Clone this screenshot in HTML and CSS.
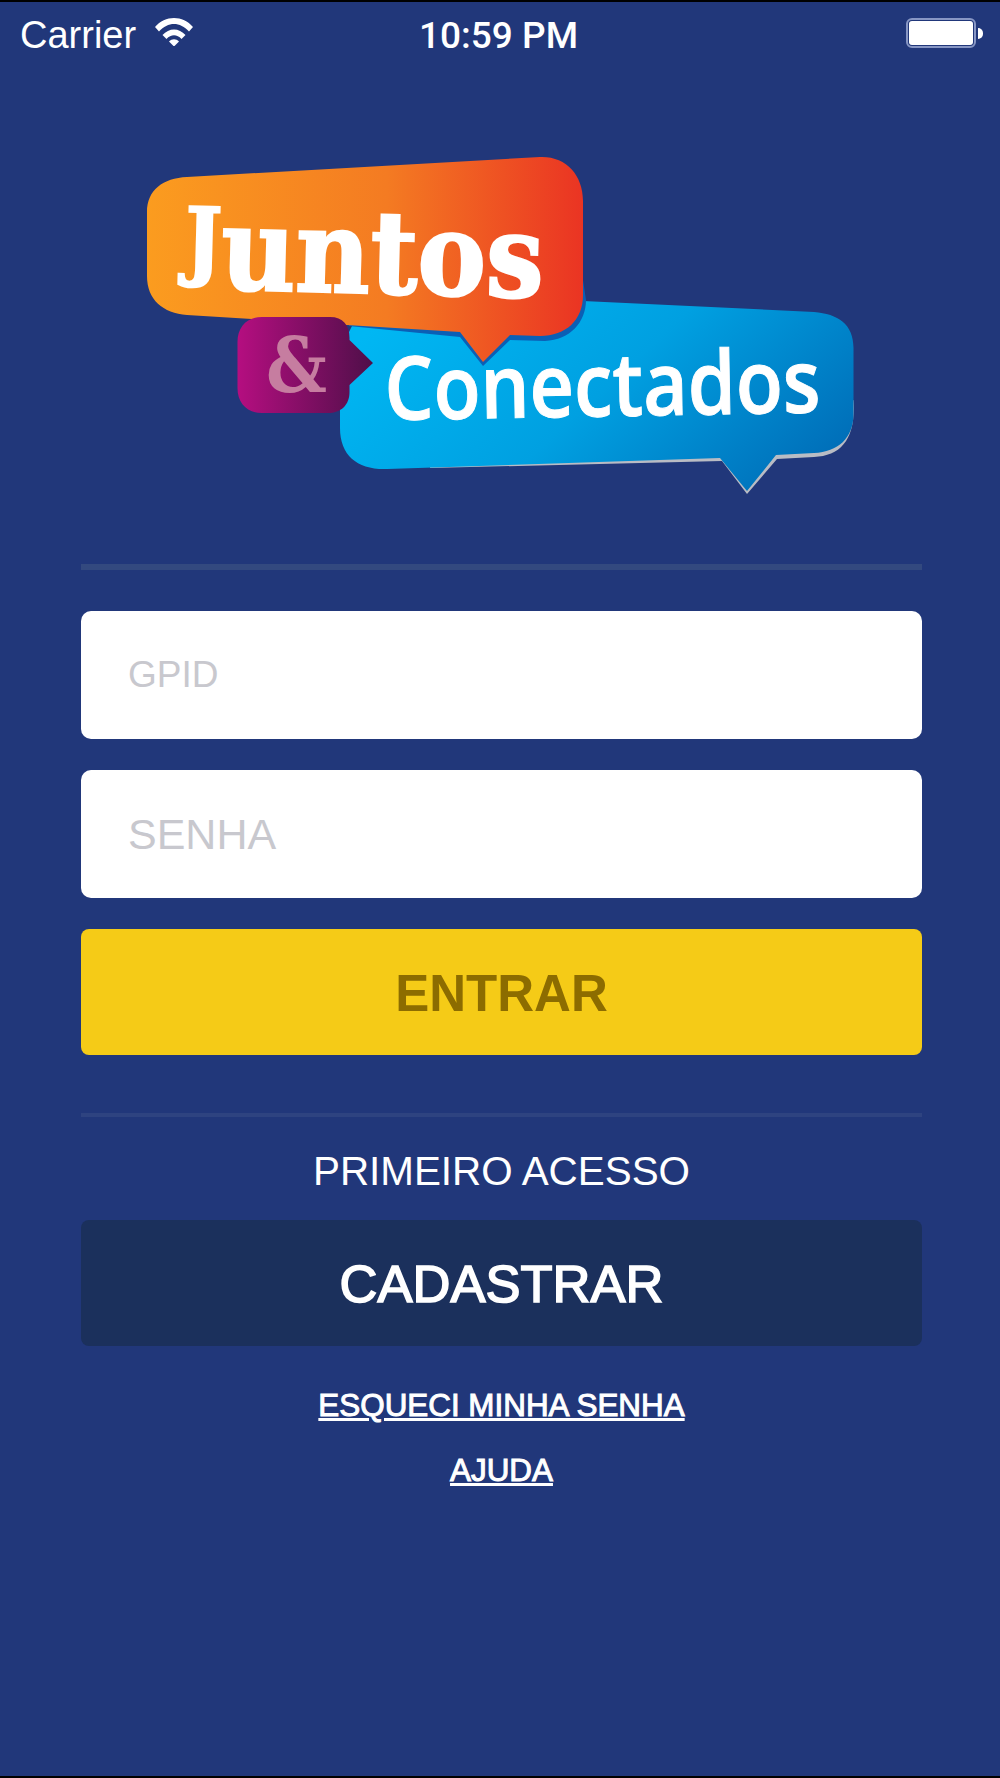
FILE: index.html
```html
<!DOCTYPE html>
<html lang="en">
<head>
  <meta charset="UTF-8" />
  <meta name="viewport" content="width=device-width, initial-scale=1.0" />
  <title>Juntos &amp; Conectados</title>
  <link rel="stylesheet" href="styles.css">
</head>
<body>
  <div class="screen">
    <div class="statusbar">
      <div class="status-left">
        <span>Carrier</span>
        <svg class="wifi" viewBox="0 0 38 28" width="38" height="28">
          <path d="M0 9 C10 -3 28 -3 38 9 L34 13.500 C25 3.500 13 3.500 4 13.500 Z" fill="#fff"/>
          <path d="M7.500 17 C14 9.500 24 9.500 30.500 17 L26.500 21 C22 16 16 16 11.500 21 Z" fill="#fff"/>
          <path d="M14 23.500 C17 20.500 21 20.500 24 23.500 L19 28.500 Z" fill="#fff"/>
        </svg>
      </div>
      <div class="status-time">10:59 PM</div>
      <div class="status-right">
        <div class="battery"><div class="battery-fill"></div></div>
        <div class="battery-nub"></div>
      </div>
    </div>

    <svg class="logo" viewBox="140 150 860 350" width="860" height="350">
      <defs>
        <linearGradient id="orange" x1="0" x2="1" y1="0" y2="0">
          <stop offset="0" stop-color="#fb9c1f"/>
          <stop offset="0.55" stop-color="#f47b22"/>
          <stop offset="1" stop-color="#ea3423"/>
        </linearGradient>
        <linearGradient id="blue" x1="0" x2="1" y1="0.3" y2="0.7">
          <stop offset="0" stop-color="#00b7f3"/>
          <stop offset="0.5" stop-color="#00a0e1"/>
          <stop offset="1" stop-color="#006fb9"/>
        </linearGradient>
        <linearGradient id="purple" x1="0" x2="1" y1="0" y2="0">
          <stop offset="0" stop-color="#b50e80"/>
          <stop offset="1" stop-color="#4f0f49"/>
        </linearGradient>
      </defs>
      <!-- blue bubble, grey edge first -->
      <path fill="#b9bcc4" d="M430 468 L722 461 L747 494 L777 459 L814 457 C842 456 856 438 853.500 400 L800 440 L430 460 Z"/>
      <path fill="url(#blue)" d="M352 326 L583 301 L814 312 C838 314 853.500 324 853.500 348 L853.500 414 C853.500 438 838 452 814 453 L776 455 L747 491 L720 458 L387 469 C358 470 340 456 340 428 L340 350 Z"/>
      <!-- orange bubble -->
      <path fill="#0b5fb5" d="M349 326 L460 337 L483 366 L510 340 L545 341 C570 340 586 322 586 300 L583 280 L349 300 Z"/>
      <path fill="url(#orange)" d="M187 177 L540 157 C566 156 583 175 583 201 L583 295 C583 320 566 336 540 336 L510 335 L483 362 L460 332 L187 315 C163 313 147 300 147 276 L147 212 C147 190 163 178 187 177 Z"/>
      <text class="logo-juntos" x="184" y="288" textLength="359" lengthAdjust="spacingAndGlyphs" transform="rotate(1.500 184 288)"><tspan class="logo-j" dy="-19">J</tspan><tspan dy="19">untos</tspan></text>
      <!-- purple bubble -->
      <path fill="url(#purple)" d="M262 317 L330 317 C343 317 349.500 325 349.500 338 L349.500 340 L373 363 L349.500 385 L349.500 392 C349.500 405 341 413 328 413 L262 413 C247 413 237.500 403 237.500 388 L237.500 342 C237.500 327 247 317 262 317 Z"/>
      <text class="logo-amp" x="266" y="392" textLength="61" lengthAdjust="spacingAndGlyphs">&amp;</text>
      <text class="logo-conectados" x="385" y="420" textLength="436" lengthAdjust="spacingAndGlyphs" transform="rotate(-1 385 420)">Conectados</text>
    </svg>

    <div class="form">
      <div class="rule rule-thick"></div>
      <input class="field" type="text" placeholder="GPID" />
      <input class="field field-second" type="password" placeholder="SENHA" />
      <button class="btn btn-yellow">ENTRAR</button>
      <div class="rule rule-thin"></div>
      <div class="first-access">PRIMEIRO ACESSO</div>
      <button class="btn btn-dark">CADASTRAR</button>
      <a class="link link-forgot" href="#">ESQUECI MINHA SENHA</a>
      <a class="link link-help" href="#">AJUDA</a>
    </div>
  </div>
</body>
</html>
```

FILE: styles.css
```css
* {
  box-sizing: border-box;
}

body {
  margin: 0;
  background: #21377a;
  font-family: "Liberation Sans", Arial, sans-serif;
  color: #fff;
}

.screen {
  height: 1778px;
  overflow: hidden;
  border-top: 2px solid #000;
  border-bottom: 2px solid #000;
}

.statusbar {
  display: grid;
  grid-template-columns: 1fr auto 1fr;
  align-items: center;
  height: 44px;
  margin-top: 11px;
  padding: 0 17px 0 20px;
  font-size: 38px;
}

.status-left {
  display: flex;
  align-items: center;
  gap: 19px;
}

.wifi {
  margin-bottom: 6px;
}

.status-time {
  margin-right: 6px;
  font-family: Roboto, sans-serif;
  font-weight: 500;
  font-size: 37px;
}

.status-right {
  display: flex;
  align-items: center;
  justify-content: flex-end;
  padding-bottom: 4px;
}

.battery {
  width: 70px;
  height: 30px;
  padding: 1px;
  border: 2px solid #8796c4;
  border-radius: 6px;
}

.battery-fill {
  height: 100%;
  background: #fff;
  border-radius: 3px;
}

.battery-nub {
  width: 5px;
  height: 11px;
  margin-left: 2px;
  background: #fff;
  border-radius: 0 6px 6px 0;
}

.logo {
  display: block;
  margin: 93px 0 0 140px;
}

.form {
  display: flex;
  flex-direction: column;
  margin: 64px 78px 0 81px;
}

.rule-thick {
  height: 6px;
  background: #33497f;
}

.rule-thin {
  height: 4px;
  margin-top: 58px;
  background: #2e4380;
}

.field {
  height: 128px;
  margin-top: 41px;
  padding: 0 47px;
  border: none;
  border-radius: 10px;
  background: #fff;
  font-family: inherit;
  font-size: 37px;
}

.field-second {
  margin-top: 31px;
  font-size: 43px;
}

.field::placeholder {
  color: #c8c8ce;
  opacity: 1;
}

.btn {
  height: 126px;
  border: none;
  border-radius: 8px;
  font-family: inherit;
  text-align: center;
}

.btn-yellow {
  margin-top: 31px;
  padding-top: 4px;
  background: #f5cb17;
  color: #8c6c00;
  font-size: 51px;
  font-weight: bold;
}

.btn-dark {
  background: #1b305c;
  color: #fff;
  font-size: 52.500px;
  -webkit-text-stroke: 1.600px #fff;
}

.first-access {
  margin-top: 31px;
  margin-bottom: 26px;
  line-height: 46px;
  font-size: 40.400px;
  text-align: center;
}

.link {
  align-self: center;
  color: #fff;
  font-size: 31.400px;
  -webkit-text-stroke: 1px #fff;
}

.link-forgot {
  margin-top: 42px;
}

.link-help {
  margin-top: 29px;
}

.logo-juntos {
  fill: #fff;
  stroke: #fff;
  stroke-width: 2.500px;
  font-family: "DejaVu Serif", serif;
  font-weight: bold;
  font-size: 115px;
}

.logo-j {
  font-size: 86px;
}

.logo-amp {
  fill: #c67da0;
  font-family: "DejaVu Serif", serif;
  font-weight: bold;
  font-size: 76px;
}

.logo-conectados {
  fill: #fff;
  stroke: #fff;
  stroke-width: 1px;
  font-family: "Open Sans", sans-serif;
  font-weight: 600;
  font-size: 88px;
}
```
